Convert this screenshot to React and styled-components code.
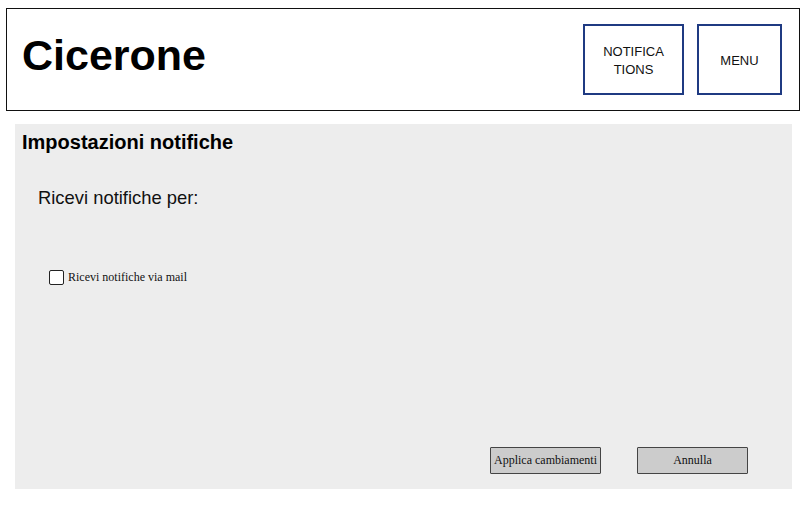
import React, { useState } from 'react';
import styled, { createGlobalStyle } from 'styled-components';

const GlobalStyle = createGlobalStyle`
  html, body {
    margin: 0;
    padding: 0;
    background: #ffffff;
    font-family: "Liberation Sans", Arial, sans-serif;
  }
  * { box-sizing: border-box; }
`;

const Page = styled.div`
  width: 811px;
  height: 508px;
  padding-top: 8px;
  display: flex;
  flex-direction: column;
`;

const Header = styled.header`
  margin-left: 6px;
  width: 794px;
  height: 103px;
  border: 1px solid #111;
  background: #fff;
  display: flex;
  align-items: center;
  padding: 0 17px 0 15px;
`;

const Title = styled.h1`
  margin: 0;
  font-size: 43px;
  font-weight: 700;
  color: #000;
  flex: 1;
  line-height: 1;
  padding-bottom: 8px;
`;

const NavButton = styled.div`
  width: ${(p) => p.width}px;
  height: 71px;
  border: 2px solid #1f3a82;
  background: #fff;
  display: flex;
  align-items: center;
  justify-content: center;
  text-align: center;
  font-size: 13px;
  line-height: 18px;
  color: #111;
  margin-left: ${(p) => p.gap || 0}px;
  padding-top: 2px;
`;

const Panel = styled.section`
  margin: 13px 0 0 15px;
  width: 777px;
  height: 365px;
  background: #ededed;
  display: flex;
  flex-direction: column;
  padding: 6px 44px 15px 7px;
`;

const PanelTitle = styled.h2`
  margin: 0;
  font-size: 20px;
  font-weight: 700;
  line-height: 24px;
  color: #000;
`;

const Question = styled.p`
  margin: 32px 0 0 16px;
  font-size: 18.4px;
  line-height: 24px;
  color: #111;
`;

const CheckRow = styled.label`
  margin: 60px 0 0 27px;
  display: flex;
  align-items: center;
  gap: 4px;
  font-family: "Liberation Serif", "Times New Roman", serif;
  font-size: 12px;
  color: #111;
  cursor: pointer;
`;

const Box = styled.span`
  width: 15px;
  height: 15px;
  border: 1px solid #222;
  border-radius: 2px;
  background: ${(p) => (p.checked ? '#333' : '#fff')};
`;

const Actions = styled.div`
  margin-top: auto;
  display: flex;
  justify-content: flex-end;
  gap: 36px;
`;

const ActionButton = styled.button`
  width: 111px;
  height: 27px;
  background: #cccccc;
  border: 1px solid #444;
  border-radius: 1px;
  font-family: "Liberation Serif", "Times New Roman", serif;
  font-size: 12px;
  color: #111;
  padding: 0;
  cursor: pointer;
`;

export default function App() {
  const [mail, setMail] = useState(false);

  return (
    <Page>
      <GlobalStyle />
      <Header>
        <Title>Cicerone</Title>
        <NavButton width={101}>
          NOTIFICA
          <br />
          TIONS
        </NavButton>
        <NavButton width={85} gap={13}>MENU</NavButton>
      </Header>
      <Panel>
        <PanelTitle>Impostazioni notifiche</PanelTitle>
        <Question>Ricevi notifiche per:</Question>
        <CheckRow onClick={() => setMail(!mail)}>
          <Box checked={mail} />
          Ricevi notifiche via mail
        </CheckRow>
        <Actions>
          <ActionButton>Applica cambiamenti</ActionButton>
          <ActionButton>Annulla</ActionButton>
        </Actions>
      </Panel>
    </Page>
  );
}
